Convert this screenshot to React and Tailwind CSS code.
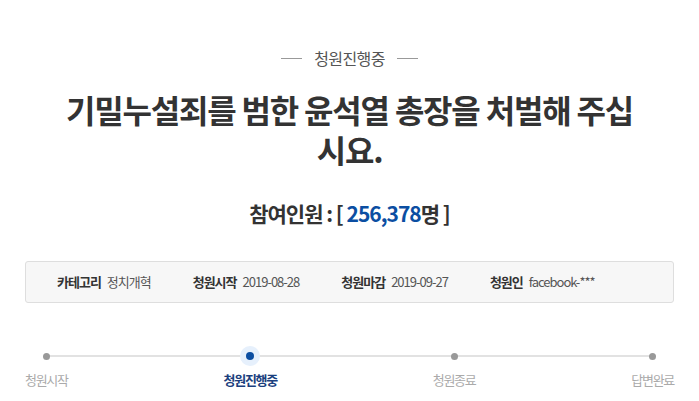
import React from 'react';

const info = [
  { label: '카테고리', value: '정치개혁' },
  { label: '청원시작', value: '2019-08-28' },
  { label: '청원마감', value: '2019-09-27' },
  { label: '청원인', value: 'facebook-***' },
];

const steps = [
  { name: '청원시작', active: false },
  { name: '청원진행중', active: true },
  { name: '청원종료', active: false },
  { name: '답변완료', active: false },
];

const App = () => {
  return (
    <div
      className="w-[699px] h-[401px] overflow-hidden bg-white px-[25px] pt-[47px]"
      style={{ fontFamily: '"Noto Sans CJK KR", "Noto Sans", sans-serif' }}
    >
      {/* status heading */}
      <div className="flex items-center justify-center gap-[12px] h-[22px]">
        <span className="block w-[21px] h-px bg-[#999]" />
        <span className="text-[16px] leading-[22px] tracking-[-0.6px] text-[#555]">청원진행중</span>
        <span className="block w-[21px] h-px bg-[#999]" />
      </div>

      {/* title */}
      <h1 className="mt-[20px] text-center text-[32px] leading-[40px] font-bold tracking-[-1.2px] text-[#333] px-[40px]">
        기밀누설죄를 범한 윤석열 총장을 처벌해 주십시요.
      </h1>

      {/* participants */}
      <p className="mt-[30px] text-center text-[21px] leading-[28px] font-bold tracking-[-1px] text-[#333]">
        참여인원 : [ <span className="text-[#0b4ea2]">256,378</span>명 ]
      </p>

      {/* info box */}
      <div className="mt-[34px] h-[42px] flex items-center gap-[42px] pl-[31px] bg-[#f7f7f7] border border-[#dedede] rounded-[3px]">
        {info.map((item) => (
          <div key={item.label} className="flex items-center gap-[6px] text-[13px] leading-[18px] tracking-[-1px]">
            <span className="font-bold text-[#333]">{item.label}</span>
            <span className="text-[#555]">{item.value}</span>
          </div>
        ))}
      </div>

      {/* progress */}
      <div className="relative mt-[43px] flex justify-between">
        <div className="absolute left-[21px] right-[21px] top-[9px] h-[2px] bg-[#e2e2e2]" />
        {steps.map((step) => (
          <div key={step.name} className="relative flex flex-col items-center">
            <div className="w-[20px] h-[20px] flex items-center justify-center">
              {step.active ? (
                <span className="w-[20px] h-[20px] rounded-full bg-[#e6f0fc] flex items-center justify-center">
                  <span className="w-[8px] h-[8px] rounded-full bg-[#0b4ea2]" />
                </span>
              ) : (
                <span className="w-[7px] h-[7px] rounded-full bg-[#999]" />
              )}
            </div>
            <span
              className={
                step.active
                  ? 'mt-[5px] text-[13px] leading-[18px] tracking-[-1.3px] font-bold text-[#1b3f7e]'
                  : 'mt-[5px] text-[13px] leading-[18px] tracking-[-1.3px] text-[#aaa]'
              }
            >
              {step.name}
            </span>
          </div>
        ))}
      </div>
    </div>
  );
};

export default App;
